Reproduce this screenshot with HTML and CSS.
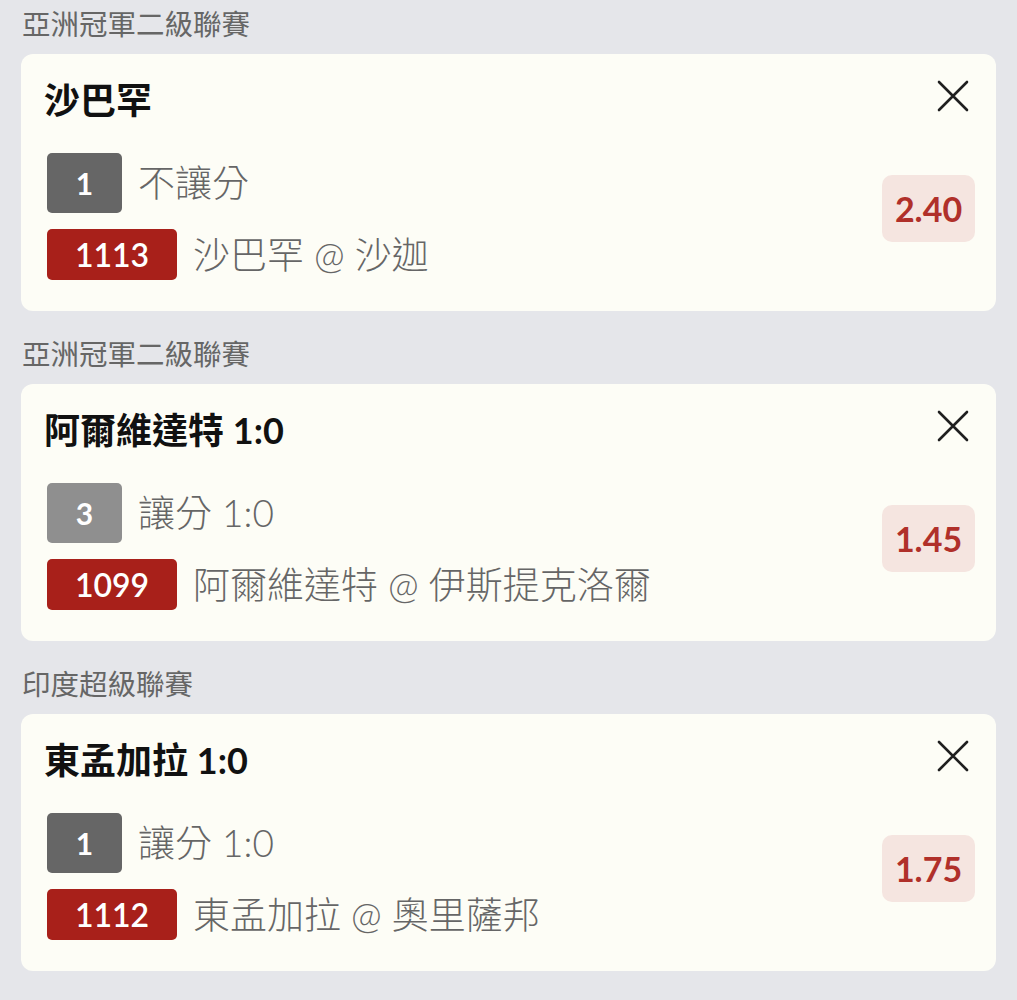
FILE: index.html
```html
<!DOCTYPE html>
<html lang="zh-Hant">
<head>
  <meta charset="UTF-8">
  <title>投注單</title>
  <link rel="stylesheet" href="styles.css">
</head>
<body>

  <div class="slip">

    <div class="league">亞洲冠軍二級聯賽</div>
    <div class="bet-card">
      <div class="bet-head">
        <div class="bet-title">沙巴罕</div>
        <button class="close-btn" type="button" aria-label="移除">
          <svg viewBox="0 0 32 32" width="32" height="32"><path d="M2 2 L30 30 M30 2 L2 30" stroke="#1f1f1f" stroke-width="2.6" stroke-linecap="round" fill="none"/></svg>
        </button>
      </div>
      <div class="bet-body">
        <div class="bet-lines">
          <div class="line">
            <span class="sel-badge">1</span>
            <span class="line-text">不讓分</span>
          </div>
          <div class="line">
            <span class="match-badge">1113</span>
            <span class="line-text">沙巴罕 @ 沙迦</span>
          </div>
        </div>
        <div class="odds">2.40</div>
      </div>
    </div>

    <div class="league">亞洲冠軍二級聯賽</div>
    <div class="bet-card">
      <div class="bet-head">
        <div class="bet-title">阿爾維達特 1:0</div>
        <button class="close-btn" type="button" aria-label="移除">
          <svg viewBox="0 0 32 32" width="32" height="32"><path d="M2 2 L30 30 M30 2 L2 30" stroke="#1f1f1f" stroke-width="2.6" stroke-linecap="round" fill="none"/></svg>
        </button>
      </div>
      <div class="bet-body">
        <div class="bet-lines">
          <div class="line">
            <span class="sel-badge light">3</span>
            <span class="line-text">讓分 1:0</span>
          </div>
          <div class="line">
            <span class="match-badge">1099</span>
            <span class="line-text">阿爾維達特 @ 伊斯提克洛爾</span>
          </div>
        </div>
        <div class="odds">1.45</div>
      </div>
    </div>

    <div class="league">印度超級聯賽</div>
    <div class="bet-card">
      <div class="bet-head">
        <div class="bet-title">東孟加拉 1:0</div>
        <button class="close-btn" type="button" aria-label="移除">
          <svg viewBox="0 0 32 32" width="32" height="32"><path d="M2 2 L30 30 M30 2 L2 30" stroke="#1f1f1f" stroke-width="2.6" stroke-linecap="round" fill="none"/></svg>
        </button>
      </div>
      <div class="bet-body">
        <div class="bet-lines">
          <div class="line">
            <span class="sel-badge">1</span>
            <span class="line-text">讓分 1:0</span>
          </div>
          <div class="line">
            <span class="match-badge">1112</span>
            <span class="line-text">東孟加拉 @ 奧里薩邦</span>
          </div>
        </div>
        <div class="odds">1.75</div>
      </div>
    </div>

  </div>

</body>
</html>
```

FILE: styles.css
```css
body {
  margin: 0;
  padding: 0;
  background-color: #e5e6ea;
  font-family: Lato, "Noto Sans CJK TC", sans-serif;
  color: #666;
}

.slip {
  padding: 0 21px 0 21px;
}

.league {
  padding: 5px 0 11px 1px;
  font-size: 28.5px;
  line-height: 38px;
  color: #666;
}

.bet-card {
  background-color: #fdfdf6;
  border-radius: 12px;
  padding: 22px 21px 31px 23px;
  margin-bottom: 19px;
}

.bet-head {
  display: flex;
  justify-content: space-between;
  align-items: flex-start;
}

.bet-title {
  font-size: 36px;
  line-height: 48px;
  font-weight: bold;
  color: #111;
}

.close-btn {
  background: none;
  border: none;
  padding: 0;
  margin: 4px 6px 0 0;
  width: 32px;
  height: 32px;
  cursor: pointer;
}

.close-btn svg {
  display: block;
}

.bet-body {
  display: flex;
  justify-content: space-between;
  align-items: center;
  margin-top: 29px;
}

.bet-lines {
  display: flex;
  flex-direction: column;
  gap: 16px;
}

.line {
  display: flex;
  align-items: center;
  gap: 16px;
  padding-left: 3px;
}

.sel-badge {
  width: 75px;
  height: 60px;
  border-radius: 5px;
  background-color: #666;
  color: #fff;
  font-size: 30px;
  font-weight: bold;
  display: flex;
  justify-content: center;
  align-items: center;
}

.sel-badge.light {
  background-color: #8f8f8f;
}

.match-badge {
  width: 130px;
  height: 51px;
  border-radius: 5px;
  background-color: #a8201a;
  color: #fff;
  font-size: 32px;
  font-weight: 600;
  display: flex;
  justify-content: center;
  align-items: center;
}

.line-text {
  font-size: 37px;
  font-weight: 300;
  line-height: 48px;
  color: #666;
}

.odds {
  width: 93px;
  height: 67px;
  margin-bottom: 16px;
  border-radius: 10px;
  background-color: #f5e5e0;
  color: #b0302a;
  font-size: 34px;
  font-weight: bold;
  display: flex;
  justify-content: center;
  align-items: center;
}
```
